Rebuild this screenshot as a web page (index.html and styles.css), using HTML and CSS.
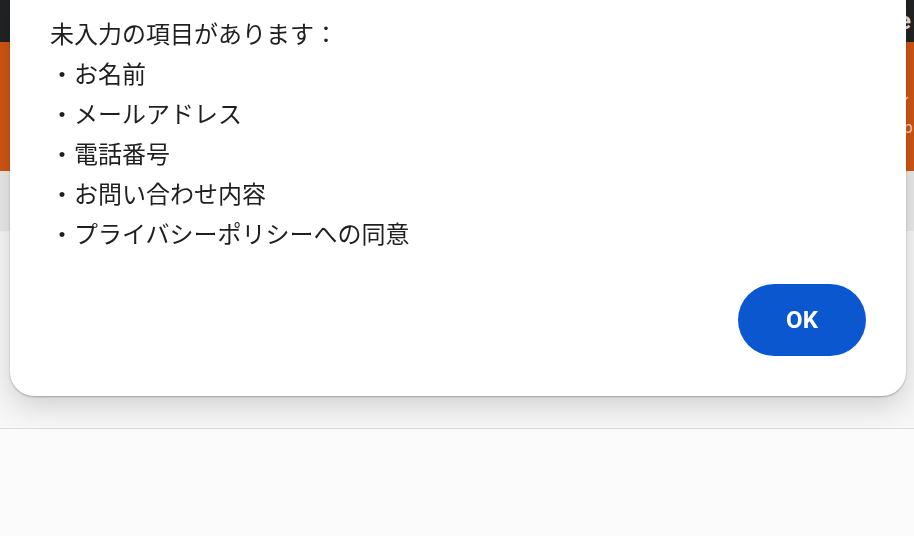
FILE: index.html
```html
<!DOCTYPE html>
<html lang="ja">
<head>
	<meta charset="utf-8">
	<title>お問い合わせ</title>
	<link rel="stylesheet" href="styles.css">
</head>
<body>
<div id="page">
	<header class="topbar">
		<span class="site-title">Contact Page</span>
	</header>
	<div class="hero">
		<span class="hero-arrow">&#8964;</span>
		<span class="hero-note">p</span>
	</div>
	<div class="subnav"></div>
	<main class="content"></main>
	<footer class="footer"></footer>
</div>

<div class="overlay">
	<div class="dialog" role="alertdialog">
		<div class="dialog-text">
			<p>未入力の項目があります：</p>
			<p>・お名前</p>
			<p>・メールアドレス</p>
			<p>・電話番号</p>
			<p>・お問い合わせ内容</p>
			<p>・プライバシーポリシーへの同意</p>
		</div>
		<div class="dialog-actions">
			<button class="btn-ok" type="button">OK</button>
		</div>
	</div>
</div>
</body>
</html>
```

FILE: styles.css
```css
html, body {
	margin: 0;
	height: 100%;
}

body {
	font-family: "Noto Sans CJK JP", "Noto Sans", sans-serif;
	background: #fbfbfb;
	overflow: hidden;
}

#page {
	display: flex;
	flex-direction: column;
	height: 536px;
}

.topbar {
	height: 42px;
	background: #222325;
	display: flex;
	align-items: center;
	justify-content: flex-end;
	padding-right: 3px;
}
.site-title {
	color: #e6e6e6;
	font-family: Roboto, sans-serif;
	font-size: 24px;
	font-weight: bold;
}

.hero {
	height: 129px;
	background: #d05612;
	display: flex;
	flex-direction: column;
	align-items: flex-end;
	padding-top: 42px;
	box-sizing: border-box;
	color: #f2d2bd;
}
.hero-arrow {
	font-size: 18px;
	line-height: 18px;
	margin-right: 2px;
}
.hero-note {
	font-size: 16px;
	line-height: 20px;
	margin-top: 14px;
	margin-right: 1px;
}

.subnav {
	height: 60px;
	background: #e9e9e9;
}

.content {
	height: 197px;
	background: #f7f7f7;
	border-bottom: 1px solid #dedede;
}

.footer {
	flex: 1;
	background: #fbfbfb;
}

.overlay {
	position: fixed;
	inset: 0;
}

.dialog {
	position: absolute;
	left: 10px;
	top: -27px;
	width: 896px;
	box-sizing: border-box;
	padding: 40px;
	background: #fff;
	border-radius: 24px;
	box-shadow: 0 1px 2px rgba(0,0,0,0.28), 0 10px 30px rgba(0,0,0,0.16);
}

.dialog-text p {
	margin: 0;
	font-size: 24px;
	line-height: 40px;
	color: #1f1f1f;
}

.dialog-actions {
	display: flex;
	justify-content: flex-end;
	margin-top: 31px;
}

.btn-ok {
	width: 128px;
	height: 72px;
	border: none;
	border-radius: 36px;
	background: #0b57d0;
	color: #fff;
	font-family: Roboto, sans-serif;
	font-size: 24px;
	font-weight: bold;
	cursor: pointer;
}
```
